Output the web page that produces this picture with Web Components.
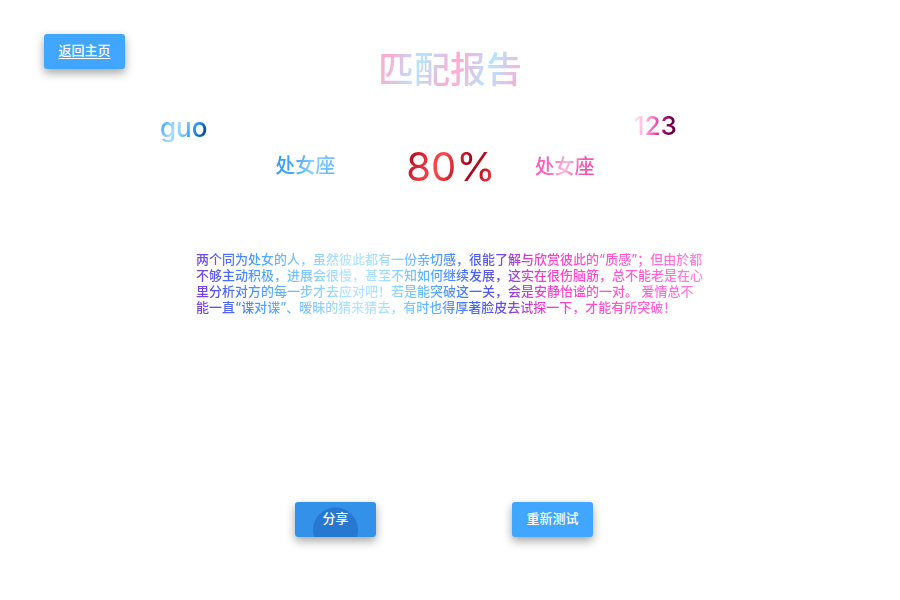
<!DOCTYPE html>
<html lang="zh-CN">
<head>
<meta charset="utf-8">
<meta name="viewport" content="width=device-width, initial-scale=1">
<title>匹配报告</title>
<style>
body { margin: 0; background: #fff; font-family: Inter, "Noto Sans CJK SC", sans-serif; font-weight: 500; }
</style>
</head>
<body>
<match-report></match-report>
<script>
const define = (name, html, setup) => customElements.define(name, class extends HTMLElement {
  connectedCallback() {
    if (this.shadowRoot) return;
    const template = document.createElement('template');
    template.innerHTML = html;
    this.attachShadow({ mode: 'open' }).append(template.content.cloneNode(true));
    if (setup) setup(this, this.shadowRoot);
  }
});

define('gradient-text', `
<style>
:host { display: block; }
span { display: block; background: var(--fill); -webkit-background-clip: text; background-clip: text; color: transparent; }
</style>
<span><slot></slot></span>`);

define('raised-button', `
<style>
:host { display: block; }
a, button {
  display: block; box-sizing: border-box; min-width: 81px; height: 35px; padding: 0 14px;
  border: 0; border-radius: 3px; background: #41a6ff; color: #fff;
  font: 500 13px/33px Inter, "Noto Sans CJK SC", sans-serif; text-align: center; cursor: pointer;
  box-shadow: 0 4px 10px rgba(0, 0, 0, .36);
}
button { padding-bottom: 2px; }
a { text-decoration: underline; text-underline-offset: 3px; }
:host([pressed]) button { background: radial-gradient(circle at 50% 28px, #2778d0 22px, #3391ea 23px); }
</style>`, (host, root) => {
  const control = document.createElement(host.hasAttribute('href') ? 'a' : 'button');
  if (control.localName === 'a') control.href = host.getAttribute('href');
  else control.type = 'button';
  control.append(document.createElement('slot'));
  root.append(control);
});

define('match-pair', `
<style>
:host { display: grid; grid-template-columns: 1fr auto 1fr; column-gap: 39px; align-items: start; }
.name { font-size: 26px; line-height: 32px; }
.sign { font-size: 20px; line-height: 28px; }
.score { font-size: 40px; line-height: 48px; font-weight: 400; margin-top: 33px; padding-left: 2px; }
.left, .right { display: flex; flex-direction: column; }
.left { align-items: flex-end; padding: 2px 30px 0 0; }
.right { align-items: flex-start; }
.left .name { margin-right: 128px; }
.left .sign { margin-top: 8px; }
.right .name { margin-left: 99px; }
.right .sign { margin-top: 11px; }
</style>
<div class="left">
  <gradient-text class="name" style="--fill:linear-gradient(115deg,#2f9cff 5%,#a6dcff 35%,#8fd0ff 48%,#2596ff 68%,#003d85 92%)">guo</gradient-text>
  <gradient-text class="sign" style="--fill:linear-gradient(110deg,#2796ff,#48a8ff 35%,#8cd0ff 60%,#58b0ff)">处女座</gradient-text>
</div>
<gradient-text class="score" style="--fill:linear-gradient(115deg,#a80017 5%,#d82834 20%,#ff4a4e 38%,#d82834 52%,#a60018 65%,#b80c20 76%,#ff4548 96%)">80%</gradient-text>
<div class="right">
  <gradient-text class="name" style="--fill:linear-gradient(100deg,#ffe8f2,#ffb8dc 28%,#f060b5 48%,#a01070 68%,#6b0048 82%)">123</gradient-text>
  <gradient-text class="sign" style="--fill:linear-gradient(110deg,#f85ab8 10%,#f56ab8 30%,#ffbcdc 50%,#f45ab0 72%,#f04aa8)">处女座</gradient-text>
</div>`);

define('match-report', `
<style>
:host { display: flex; flex-direction: column; box-sizing: border-box; min-height: 100vh; padding-bottom: 63px; }
header { display: grid; grid-template-columns: 1fr auto 1fr; padding: 34px 44px 0; }
raised-button { justify-self: start; }
h1 { margin: 10px 0 0; font-size: 36px; line-height: 52px; font-weight: 500; }
match-pair { margin-top: 14px; }
.story { width: 508px; max-width: 90%; margin: 60px auto 32px; font-size: 13px; line-height: 16px; }
footer { display: flex; justify-content: center; gap: 136px; margin-top: auto; padding-right: 12px; }
</style>
<header>
  <raised-button href="#home">返回主页</raised-button>
  <h1><gradient-text style="--fill:repeating-linear-gradient(110deg,#ffaad0 12px,#b6e4ff 46px,#ffaad0 80px)">匹配报告</gradient-text></h1>
</header>
<match-pair></match-pair>
<gradient-text class="story" style="--fill:linear-gradient(83deg,#8a3cda,#4f58f5 5%,#48a0ff 13%,#7cc8ff 22%,#b8e6ff 31%,#a8e0ff 37%,#58b4ff 46%,#4068ff 54%,#6848e0 60%,#e038d0 66%,#ff45cc 73%,#ff60d4 88%,#ff88e0)">两个同为处女的人，虽然彼此都有一份亲切感，很能了解与欣赏彼此的“质感”；但由於都不够主动积极，进展会很慢，甚至不知如何继续发展，这实在很伤脑筋，总不能老是在心里分析对方的每一步才去应对吧！若是能突破这一关，会是安静怡谧的一对。 爱情总不能一直“谍对谍”、暧昧的猜来猜去，有时也得厚著脸皮去试探一下，才能有所突破！</gradient-text>
<footer>
  <raised-button pressed>分享</raised-button>
  <raised-button>重新测试</raised-button>
</footer>`);
</script>
</body>
</html>
